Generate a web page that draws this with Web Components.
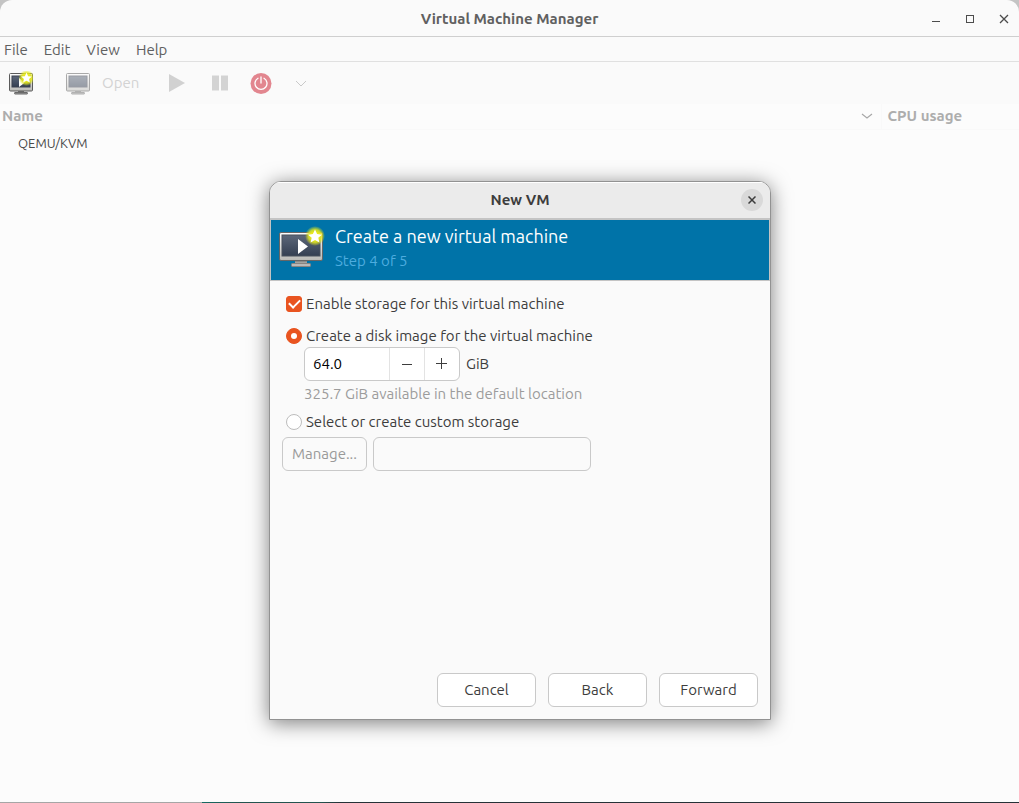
<!DOCTYPE html>
<html lang="en">
<head>
<meta charset="utf-8">
<title>Virtual Machine Manager</title>
<style>
  html, body { height: 100%; }
  body { margin: 0; font: 15px/20px Ubuntu, "Noto Sans", sans-serif; color: #3d3d3d; background: #c4c4c4; }
</style>
</head>
<body>
<vm-manager></vm-manager>

<script>
const define = (name, html) => customElements.define(name, class extends HTMLElement {
  constructor() {
    super();
    this.attachShadow({ mode: 'open' }).innerHTML =
      '<style>*{box-sizing:border-box}button,input{font:inherit;color:inherit;margin:0}svg{display:block}</style>' + html;
  }
});

const star = 'M0-6.4L1.9-2.2L6.3-1.7L3 1.1L4 5.4L0 3.2L-4 5.4L-3 1.1L-6.3-1.7L-1.9-2.2Z';

const gradients = (id) => `
  <defs>
    <linearGradient id="${id}f" x2="0" y2="1"><stop offset="0" stop-color="#fff"/><stop offset="1" stop-color="#b9b9b5"/></linearGradient>
    <linearGradient id="${id}s" x2="0" y2="1"><stop offset="0" stop-color="#5c6779"/><stop offset="1" stop-color="#343f52"/></linearGradient>
    <linearGradient id="${id}b" x2="0" y2="1"><stop offset="0" stop-color="#666"/><stop offset="1" stop-color="#c6c6c4"/></linearGradient>
    <radialGradient id="${id}g"><stop offset=".4" stop-color="#e9e91e"/><stop offset=".65" stop-color="#e2e61c" stop-opacity=".85"/><stop offset="1" stop-color="#dfe61a" stop-opacity="0"/></radialGradient>
  </defs>`;

define('monitor-icon', `
  <style>
    :host { display: block; width: 24px; height: 24px; }
    :host([disabled]) { opacity: .5; }
    .new { display: none; }
    :host([new]) .new { display: block; }
  </style>
  <svg width="24" height="24" viewBox="0 0 24 24" aria-hidden="true">
    ${gradients('a')}
    <path d="M9 20h6v2H9z" fill="#777"/>
    <rect x="5.500" y="21.500" width="13" height="1.500" rx=".5" fill="#999" stroke="#6a6a6a"/>
    <rect x=".5" y="2.500" width="23" height="17.500" rx="1" fill="url(#af)" stroke="#5b5b5b"/>
    <rect x="3" y="5" width="18" height="11" fill="url(#as)" stroke="#3c4350"/>
    <g class="new">
      <path d="M10 7l6 4.500-6 4.500z" fill="#fff"/>
      <circle cx="17.500" cy="7" r="8" fill="url(#ag)"/>
      <path d="${star}" transform="translate(17.500 7) scale(.85)" fill="#fff"/>
    </g>
  </svg>`);

define('new-machine-icon', `
  <style>:host { display: block; width: 48px; height: 48px; }</style>
  <svg width="48" height="48" viewBox="0 0 48 48" aria-hidden="true">
    ${gradients('b')}
    <path d="M16 36h12v4H16z" fill="url(#bb)"/>
    <rect x="12.500" y="39.500" width="19" height="3" rx=".8" fill="#b9b9b9" stroke="#8a8480"/>
    <rect x=".5" y="8.500" width="43" height="28" rx="1.500" fill="url(#bf)" stroke="#666"/>
    <rect x="3" y="11" width="38" height="21" fill="url(#bs)" stroke="#49505d"/>
    <path d="M19 15l10 7.500-10 7.500z" fill="#fff"/>
    <circle cx="36" cy="12" r="10" fill="url(#bg)"/>
    <path d="${star}" transform="translate(36 12.500) scale(1.100)" fill="#fff"/>
  </svg>`);

define('window-bar', `
  <style>
    :host { display: grid; grid-template-columns: 1fr auto 1fr; align-items: center; box-sizing: border-box; height: 37px; padding: 1px 7px 0;
      border-bottom: 1px solid #cfcfcf; font-weight: 700; color: #606060; }
    h1 { grid-column: 2; margin: 0; font: inherit; }
    nav { display: flex; justify-content: flex-end; gap: 18px; }
    button { display: grid; place-items: center; width: 16px; height: 16px; padding: 0; border: 0; background: none; }
    path, rect { fill: none; stroke: #4c4c4c; }
  </style>
  <h1><slot></slot></h1>
  <nav>
    <button aria-label="Minimize"><svg width="16" height="16"><path d="M4 10.500h8"/></svg></button>
    <button aria-label="Maximize"><svg width="16" height="16"><rect x="4.500" y="4.500" width="7" height="7"/></svg></button>
    <button aria-label="Close"><svg width="16" height="16"><path d="M4 4l8 8M12 4l-8 8" stroke-width="1.300"/></svg></button>
  </nav>`);

define('menu-bar', `
  <style>
    :host { display: flex; align-items: center; gap: 16px; box-sizing: border-box; height: 25px; padding: 1px 0 0 4px; border-bottom: 1px solid #e0e0e0; color: #606060; }
    button { padding: 0; border: 0; background: none; }
  </style>
  <button>File</button><button>Edit</button><button>View</button><button>Help</button>`);

define('tool-bar', `
  <style>
    :host { display: flex; align-items: center; box-sizing: border-box; height: 42px; padding-left: 9px; }
    button { display: flex; align-items: center; gap: 12px; padding: 0; border: 0; background: none; }
    button:disabled { color: #d3d3d3; }
    hr { width: 1px; height: 34px; margin: 0 16px; border: 0; background: #dedede; }
    .open { margin-right: 28px; }
    .run { margin-right: 24px; }
    .pause { margin-right: 20px; }
    .off { margin-right: 20px; }
  </style>
  <button aria-label="Create a new virtual machine"><monitor-icon new></monitor-icon></button>
  <hr>
  <button class="open" disabled><monitor-icon disabled></monitor-icon>Open</button>
  <button class="run" disabled aria-label="Run"><svg width="20" height="20"><path d="M2 1l16 9-16 9z" fill="#d1d1d1"/></svg></button>
  <button class="pause" disabled aria-label="Pause"><svg width="18" height="18"><path d="M1 1.500h7v15H1zM10 1.500h7v15h-7z" fill="#d3d3d3"/></svg></button>
  <button class="off" disabled aria-label="Shut down"><svg width="24" height="24" fill="none" stroke="#fff" stroke-width="1.300" stroke-linecap="round">
    <circle cx="12" cy="12.500" r="10.500" fill="#e2868f" stroke="none"/><path d="M9 7.200a6 6 0 1 0 6 0M12 6v6"/></svg></button>
  <button disabled aria-label="Shut down menu"><svg width="16" height="16"><path d="M3 6l5 5 5-5" fill="none" stroke="#c9c9c9"/></svg></button>`);

define('machine-list', `
  <style>
    :host { display: block; flex: 1; background: #fcfcfc; }
    table { width: 100%; border-collapse: collapse; table-layout: fixed; }
    th { height: 25px; padding: 0 8px 0 2px; text-align: left; color: #adadad; border-bottom: 1px solid #f9f9f9; }
    th:last-child { width: 138px; padding-left: 6px; border-left: 1px solid #f9f9f9; }
    th > div { display: flex; align-items: center; justify-content: space-between; }
    td { height: 27px; padding: 0 0 0 18px; font-size: 13px; color: #4a4a4a; }
  </style>
  <table>
    <thead><tr>
      <th scope="col"><div>Name <svg width="12" height="12"><path d="M1 4l5 4 5-4" fill="none" stroke="#a8a8a8" stroke-width="1.200"/></svg></div></th>
      <th scope="col">CPU usage</th>
    </tr></thead>
    <tbody><tr><td>QEMU/KVM</td><td></td></tr></tbody>
  </table>`);

define('spin-button', `
  <style>
    :host { display: flex; box-sizing: border-box; width: 156px; height: 34px; border: 1px solid #c9c9c9; border-radius: 6px; background: #fff; overflow: hidden; color: #000; }
    input { flex: 1; min-width: 0; padding: 0 8px; border: 0; background: none; }
    button { display: grid; place-items: center; width: 35px; padding: 0; border: 0; border-left: 1px solid #e3e3e3; background: none; }
    path { stroke: #3d3d3d; fill: none; }
  </style>
  <input type="text" inputmode="decimal" value="64.0" aria-label="Disk size in GiB">
  <button aria-label="Decrease"><svg width="12" height="12"><path d="M1 6.500h10"/></svg></button>
  <button aria-label="Increase"><svg width="12" height="12"><path d="M0 5.500h11M5.500 0v11"/></svg></button>`);

define('wizard-banner', `
  <style>
    :host { display: flex; gap: 8px; box-sizing: border-box; height: 62px; padding: 4px 8px 0; border: 1px solid #c4c4c4; background: #0073a8; color: #fff; }
    h2 { margin: 0; font-size: 18px; line-height: 25px; font-weight: 400; }
    p { margin: 0; line-height: 24px; color: #4dacdf; }
  </style>
  <new-machine-icon></new-machine-icon>
  <div><h2><slot></slot></h2><p><slot name="step"></slot></p></div>`);

define('storage-form', `
  <style>
    :host { display: block; flex: 1; padding: 13px 12px 0; }
    label { display: flex; align-items: center; gap: 4px; padding-left: 4px; }
    .choice { margin-top: 12px; }
    .size { display: flex; align-items: center; gap: 6px; margin: 1px 0 3px; padding-left: 22px; }
    .hint { margin: 0 0 8px; padding-left: 22px; color: #9c9c9c; }
    .custom { display: flex; gap: 6px; margin-top: 5px; }
    input[type=checkbox], input[type=radio] { appearance: none; display: grid; place-items: center; width: 16px; height: 16px; flex: none; border: 1px solid #bdbdbd; background: #fff; }
    input[type=checkbox] { border-radius: 3px; }
    input[type=radio] { border-radius: 50%; }
    input:checked { border-color: #e95420; background: #e95420; }
    input[type=radio]:checked::before { content: ""; width: 6px; height: 6px; border-radius: 50%; background: #fff; }
    input[type=checkbox]:checked::before { content: ""; width: 9px; height: 5px; margin-bottom: 3px; border: solid #fff; border-width: 0 0 2px 2px; transform: rotate(-45deg); }
    .custom button, .custom input { height: 34px; border: 1px solid #c9c9c9; border-radius: 6px; background: #fafafa; }
    .custom button { width: 85px; padding: 0; color: #999; }
    .custom input { width: 218px; padding: 0 8px; }
  </style>
  <label><input type="checkbox" checked>Enable storage for this virtual machine</label>
  <label class="choice"><input type="radio" name="storage" checked>Create a disk image for the virtual machine</label>
  <div class="size"><spin-button></spin-button>GiB</div>
  <p class="hint">325.7 GiB available in the default location</p>
  <label><input type="radio" name="storage">Select or create custom storage</label>
  <div class="custom"><button disabled>Manage...</button><input type="text" disabled aria-label="Custom storage path"></div>`);

define('vm-dialog', `
  <style>
    :host { display: flex; flex-direction: column; width: 502px; height: 539px; box-sizing: border-box; border: 1px solid #929292;
      border-radius: 12px 12px 0 0; background: #fafafa; overflow: hidden; color: #3d3d3d;
      box-shadow: 0 3px 20px rgba(0,0,0,.5); }
    header { display: grid; grid-template-columns: 1fr auto 1fr; align-items: center; height: 37px; padding: 0 7px; background: #ebebeb; border-bottom: 1px solid #c4c4c4; box-shadow: inset 0 1px #fff; font-weight: 700; }
    h2 { grid-column: 2; margin: 0; font: inherit; }
    header button { justify-self: end; display: grid; place-items: center; width: 22px; height: 22px; padding: 0; border: 0; border-radius: 50%; background: #d9d9d9; }
    footer { display: flex; justify-content: flex-end; gap: 12px; padding: 12px; }
    footer button { width: 99px; height: 34px; padding: 0; border: 1px solid #c9c9c9; border-radius: 6px; background: #fff; }
  </style>
  <header><h2>New VM</h2><button aria-label="Close"><svg width="8" height="8"><path d="M.5.5l7 7M7.500.5l-7 7" stroke="#3d3d3d" stroke-width="1.500"/></svg></button></header>
  <wizard-banner>Create a new virtual machine<span slot="step">Step 4 of 5</span></wizard-banner>
  <storage-form></storage-form>
  <footer><button>Cancel</button><button>Back</button><button>Forward</button></footer>`);

define('vm-manager', `
  <style>
    :host { display: flex; flex-direction: column; position: relative; height: 100%; background: #fafafa; border-radius: 12px 12px 0 0; overflow: hidden; }
    vm-dialog { position: absolute; left: 269px; top: 181px; }
    .edge { height: 1px; background: linear-gradient(90deg, #a6a6a6 202px, #156b63 202px, #24544f 240px, #24544f 320px, #263238 340px); }
  </style>
  <window-bar>Virtual Machine Manager</window-bar>
  <menu-bar></menu-bar>
  <tool-bar></tool-bar>
  <machine-list></machine-list>
  <div class="edge"></div>
  <vm-dialog role="dialog" aria-label="New VM"></vm-dialog>`);
</script>
</body>
</html>
